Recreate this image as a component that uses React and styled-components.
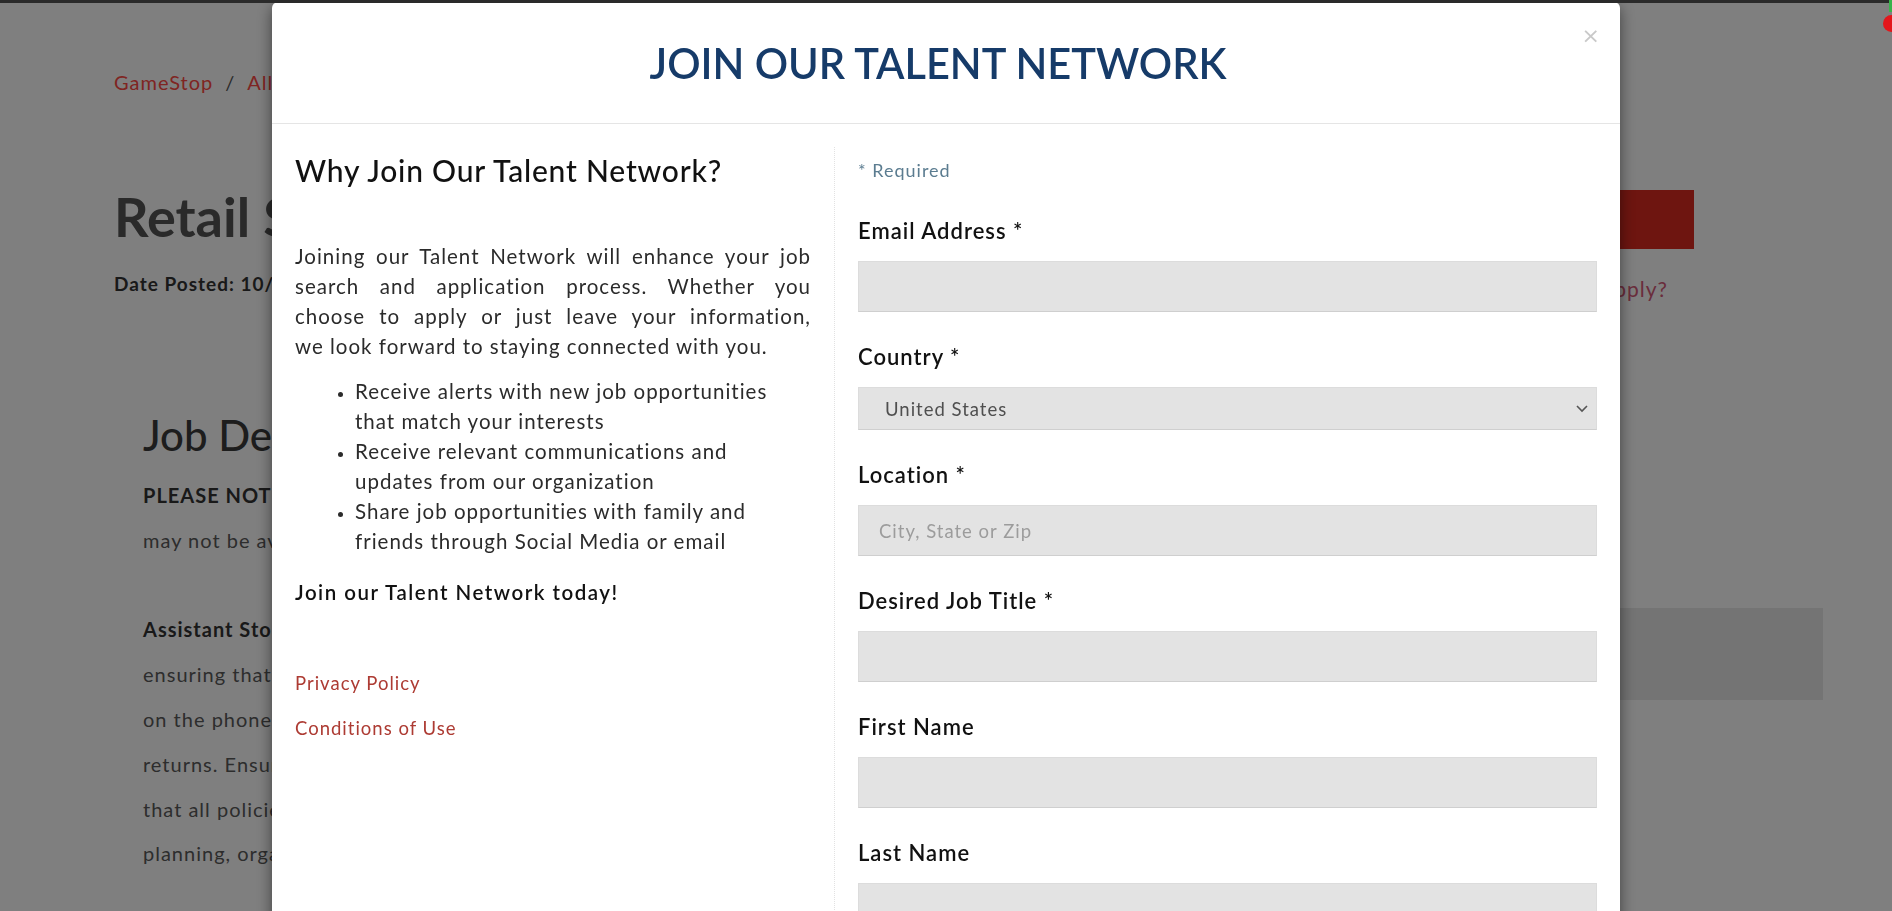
import React from "react";
import styled, { createGlobalStyle } from "styled-components";

const GlobalStyle = createGlobalStyle`
  html, body {
    margin: 0;
    padding: 0;
    height: 100%;
    overflow: hidden;
  }
  body {
    font-family: Lato, "Liberation Sans", sans-serif;
    background: #fff;
  }
  * {
    box-sizing: border-box;
  }
`;

const Page = styled.div`
  position: relative;
  width: 100%;
  height: 911px;
  overflow: hidden;
  background: #fff;
`;

const BrowserStrip = styled.div`
  position: fixed;
  top: 0;
  left: 0;
  right: 0;
  height: 3px;
  background: #2a2a2a;
  z-index: 30;
`;

const NotifyDot = styled.div`
  position: fixed;
  top: 15px;
  right: -8px;
  width: 17px;
  height: 17px;
  border-radius: 50%;
  background: #e3161b;
  z-index: 30;
  &::before {
    content: "";
    position: absolute;
    top: -15px;
    left: 6px;
    width: 3px;
    height: 12px;
    background: #38b24a;
  }
`;

/* ---------- job page behind the modal ---------- */

const JobPage = styled.main`
  padding: 69px 0 0 114px;
  color: #333;
`;

const Breadcrumb = styled.nav`
  font-size: 20px;
  line-height: 27px;
  letter-spacing: 1px;
  display: flex;
  gap: 12px;
  color: #555;
`;

const CrumbLink = styled.a`
  color: #ff4a44;
  text-decoration: none;
`;

const HeadRow = styled.div`
  display: flex;
  justify-content: space-between;
  align-items: flex-start;
  margin-top: 88px;
  padding-right: 198px;
`;

const JobTitle = styled.h1`
  margin: 0;
  font-size: 54px;
  line-height: 65px;
  font-weight: 700;
  color: #555;
`;

const Posted = styled.div`
  margin-top: 21px;
  font-size: 19px;
  line-height: 27px;
  letter-spacing: 1px;
  font-weight: 700;
  color: #333;
`;

const ApplyCol = styled.div`
  display: flex;
  flex-direction: column;
  align-items: flex-end;
  margin-top: 6px;
`;

const ApplyButton = styled.button`
  width: 260px;
  height: 59px;
  border: 0;
  background: #dc2a20;
  color: #fff;
  font-family: inherit;
  font-size: 20px;
`;

const ApplyHelp = styled.a`
  margin-top: 26px;
  margin-right: 26px;
  font-size: 21px;
  line-height: 28px;
  letter-spacing: 1px;
  color: #d45a78;
`;

const BodyRow = styled.div`
  display: flex;
  justify-content: space-between;
  padding-right: 69px;
  margin-top: 107px;
`;

const Description = styled.section`
  padding-left: 29px;
`;

const SectionTitle = styled.h2`
  margin: 0 0 13px;
  font-size: 42px;
  line-height: 50px;
  font-weight: 500;
  color: #3a3a3a;
`;

const DescLine = styled.div`
  font-size: 20px;
  line-height: 44.8px;
  min-height: 44.8px;
  letter-spacing: 1px;
  white-space: nowrap;
  font-weight: ${(p) => (p.$bold ? 700 : 400)};
  color: ${(p) => (p.$bold ? "#333" : "#5a5a5a")};
`;

const SideBox = styled.aside`
  width: 400px;
  height: 92px;
  margin-top: 198px;
  background: #e8e8e8;
`;

/* ---------- modal ---------- */

const Backdrop = styled.div`
  position: fixed;
  inset: 0;
  background: rgba(0, 0, 0, 0.5);
  display: flex;
  justify-content: center;
  align-items: flex-start;
  z-index: 10;
`;

const Modal = styled.div`
  position: relative;
  width: 1348px;
  margin-top: 2px;
  background: #fff;
  border-radius: 6px;
  box-shadow: 0 5px 15px rgba(0, 0, 0, 0.5);
`;

const ModalHeader = styled.header`
  height: 122px;
  border-bottom: 1px solid #e5e5e5;
  display: flex;
  align-items: center;
  justify-content: center;
`;

const ModalTitle = styled.h1`
  margin: 0 16px 0 0;
  font-size: 41.5px;
  font-weight: 600;
  color: #163b69;
`;

const CloseButton = styled.button`
  position: absolute;
  top: 22px;
  right: 20px;
  border: 0;
  background: none;
  padding: 0;
  font-family: "DejaVu Sans", sans-serif;
  font-size: 22px;
  line-height: 24px;
  color: #c9c9c9;
  cursor: pointer;
`;

const ModalBody = styled.div`
  display: grid;
  grid-template-columns: 562px 1fr;
  padding-top: 23px;
  letter-spacing: 1px;
`;

const InfoCol = styled.div`
  padding: 0 23px;
  color: #2b2b2b;
`;

const InfoHeading = styled.h2`
  margin: 5px 0 0;
  font-size: 30px;
  line-height: 36px;
  letter-spacing: 0.8px;
  font-weight: 500;
  color: #111;
`;

const InfoText = styled.p`
  margin: 53px 0 0;
  font-size: 20.5px;
  line-height: 30px;
`;

const TextLine = styled.span`
  display: block;
  text-align: justify;
  text-align-last: ${(p) => (p.$last ? "left" : "justify")};
`;

const Perks = styled.ul`
  margin: 15px 0 0;
  padding-left: 60px;
  padding-right: 5px;
  font-size: 20.5px;
  line-height: 30px;
  li::marker {
    font-size: 16px;
  }
`;

const Cta = styled.p`
  margin: 21px 0 0;
  font-size: 20.5px;
  line-height: 30px;
  letter-spacing: 1.5px;
  font-weight: 600;
  color: #111;
`;

const Links = styled.div`
  margin-top: 63px;
  display: flex;
  flex-direction: column;
  gap: 18px;
`;

const FooterLink = styled.a`
  font-size: 18.5px;
  line-height: 27px;
  color: #ad3b33;
  text-decoration: none;
`;

const FormCol = styled.form`
  border-left: 1px dotted #e2e2e2;
  padding: 11px 23px 0;
  min-height: 800px;
`;

const Required = styled.div`
  font-size: 18px;
  line-height: 25px;
  color: #5b7c90;
  margin-bottom: 33px;
`;

const Field = styled.div`
  margin-bottom: 30px;
`;

const Label = styled.label`
  display: block;
  font-size: 22px;
  line-height: 30px;
  font-weight: 600;
  color: #111;
  margin-bottom: 15px;
`;

const TextInput = styled.input`
  display: block;
  width: 100%;
  height: 51px;
  padding: 0 20px;
  background: #e3e3e3;
  border: 1px solid #dcdcdc;
  border-bottom-color: #cfcfcf;
  font-family: inherit;
  font-size: 18.5px;
  letter-spacing: 1px;
  color: #555;
  outline: none;
  &::placeholder {
    color: #9c9c9c;
  }
`;

const SelectWrap = styled.div`
  position: relative;
`;

const Select = styled.select`
  display: block;
  width: 100%;
  height: 43px;
  padding: 0 26px;
  appearance: none;
  background: #e3e3e3;
  border: 1px solid #dcdcdc;
  border-bottom-color: #cfcfcf;
  border-radius: 0;
  font-family: inherit;
  font-size: 18.5px;
  letter-spacing: 1px;
  color: #4f4f4f;
  outline: none;
`;

const Chevron = styled.svg`
  position: absolute;
  right: 8px;
  top: 50%;
  width: 14px;
  height: 14px;
  margin-top: -8px;
  pointer-events: none;
`;

const introLines = [
  "Joining our Talent Network will enhance your job",
  "search and application process. Whether you",
  "choose to apply or just leave your information,",
  "we look forward to staying connected with you.",
];

const fields = [
  { label: "Email Address *" },
  { label: "Country *", select: true },
  { label: "Location *", placeholder: "City, State or Zip" },
  { label: "Desired Job Title *" },
  { label: "First Name" },
  { label: "Last Name" },
];

const descLines = [
  { text: "PLEASE NOTE: This posting is for an internal candidate and", bold: true },
  { text: "may not be available to external applicants." },
  { text: "" },
  { text: "Assistant Store Leaders are responsible for", bold: true },
  { text: "ensuring that customers are greeted and assisted, whether" },
  { text: "on the phone or in the store, with purchases, trades and" },
  { text: "returns. Ensures the store is clean and organized and" },
  { text: "that all policies and procedures are followed. Assists with" },
  { text: "planning, organizing and directing store operations." },
];

export default function App() {
  return (
    <Page>
      <GlobalStyle />
      <BrowserStrip />
      <NotifyDot />

      <JobPage>
        <Breadcrumb>
          <CrumbLink href="#">GameStop</CrumbLink>
          <span>/</span>
          <CrumbLink href="#">All Jobs</CrumbLink>
        </Breadcrumb>
        <HeadRow>
          <div>
            <JobTitle>Retail Store Leader</JobTitle>
            <Posted>Date Posted: 10/02/2019</Posted>
          </div>
          <ApplyCol>
            <ApplyButton>Apply Now</ApplyButton>
            <ApplyHelp>Ready to apply?</ApplyHelp>
          </ApplyCol>
        </HeadRow>
        <BodyRow>
          <Description>
            <SectionTitle>Job Description</SectionTitle>
            {descLines.map((l, i) => (
              <DescLine key={i} $bold={l.bold}>
                {l.text}
              </DescLine>
            ))}
          </Description>
          <SideBox />
        </BodyRow>
      </JobPage>

      <Backdrop>
        <Modal>
          <ModalHeader>
            <ModalTitle>JOIN OUR TALENT NETWORK</ModalTitle>
          </ModalHeader>
          <CloseButton aria-label="Close">×</CloseButton>
          <ModalBody>
            <InfoCol>
              <InfoHeading>Why Join Our Talent Network?</InfoHeading>
              <InfoText>
                {introLines.map((line, i) => (
                  <TextLine key={i} $last={i === introLines.length - 1}>
                    {line}
                  </TextLine>
                ))}
              </InfoText>
              <Perks>
                <li>Receive alerts with new job opportunities that match your interests</li>
                <li>Receive relevant communications and updates from our organization</li>
                <li>Share job opportunities with family and friends through Social Media or email</li>
              </Perks>
              <Cta>Join our Talent Network today!</Cta>
              <Links>
                <FooterLink href="#">Privacy Policy</FooterLink>
                <FooterLink href="#">Conditions of Use</FooterLink>
              </Links>
            </InfoCol>
            <FormCol onSubmit={(e) => e.preventDefault()}>
              <Required>* Required</Required>
              {fields.map((f) => (
                <Field key={f.label}>
                  <Label>{f.label}</Label>
                  {f.select ? (
                    <SelectWrap>
                      <Select defaultValue="US">
                        <option value="US">United States</option>
                      </Select>
                      <Chevron viewBox="0 0 14 14">
                        <path d="M2 5l5 5 5-5" fill="none" stroke="#555" strokeWidth="1.6" />
                      </Chevron>
                    </SelectWrap>
                  ) : (
                    <TextInput placeholder={f.placeholder} />
                  )}
                </Field>
              ))}
            </FormCol>
          </ModalBody>
        </Modal>
      </Backdrop>
    </Page>
  );
}
